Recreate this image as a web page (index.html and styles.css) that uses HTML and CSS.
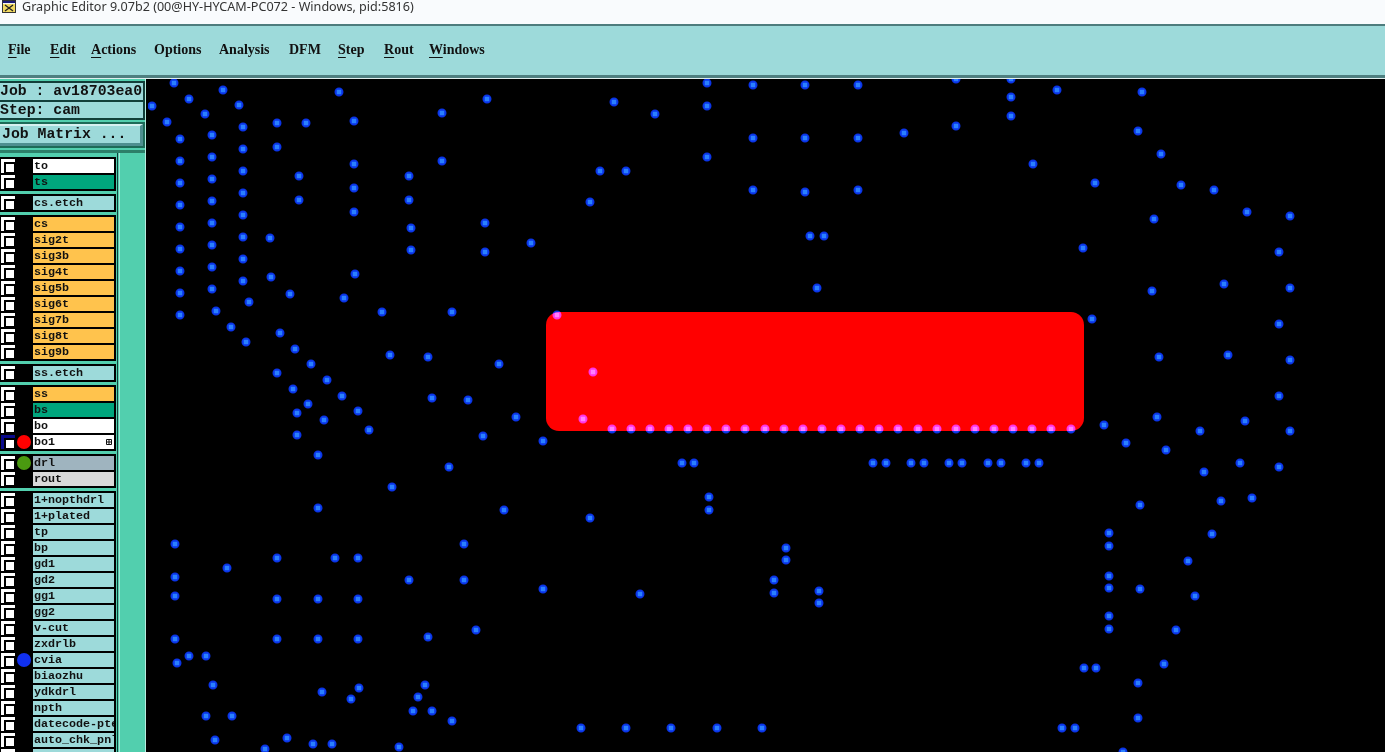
FILE: index.html
```html
<!DOCTYPE html>
<html lang="en">
<head>
<meta charset="utf-8">
<title>Graphic Editor</title>
<link rel="stylesheet" href="styles.css">
</head>
<body>
<header class="titlebar">
  <svg class="app-icon" viewBox="0 0 14 13" aria-hidden="true">
    <rect x="0" y="0" width="14" height="13" fill="#f4f4f4"/>
    <rect x="0" y="0" width="14" height="3" fill="#1c1c78"/>
    <rect x="1" y="4" width="12" height="8" fill="#f0d860"/>
    <path d="M3 5l8 6M11 5l-8 6" stroke="#222" stroke-width="1.3" fill="none"/>
    <rect x="0.5" y="0.5" width="13" height="12" fill="none" stroke="#333"/>
  </svg>
  <span class="title-text">Graphic Editor 9.07b2 (00@HY-HYCAM-PC072 - Windows, pid:5816)</span>
</header>
<nav class="menubar">
  <span class="menu-item m-file"><u>F</u>ile</span>
  <span class="menu-item m-edit"><u>E</u>dit</span>
  <span class="menu-item m-actions"><u>A</u>ctions</span>
  <span class="menu-item m-options">Options</span>
  <span class="menu-item m-analysis">Analysis</span>
  <span class="menu-item m-dfm">DFM</span>
  <span class="menu-item m-step"><u>S</u>tep</span>
  <span class="menu-item m-rout"><u>R</u>out</span>
  <span class="menu-item m-windows"><u>W</u>indows</span>
</nav>
<main class="workspace">
  <aside class="sidebar">
    <div class="info info-first">Job : av18703ea0</div>
    <div class="info">Step: cam</div>
    <div class="matrix-frame"><button class="matrix-btn" type="button">Job Matrix ...</button></div>
    <div class="side-body">
      <div class="layers">
        <section class="group">
          <div class="row"><span class="check"></span><span class="spot"></span><span class="label c-white">to</span></div>
          <div class="row"><span class="check"></span><span class="spot"></span><span class="label c-teal">ts</span></div>
        </section>
        <section class="group">
          <div class="row"><span class="check"></span><span class="spot"></span><span class="label c-pale">cs.etch</span></div>
        </section>
        <section class="group">
          <div class="row"><span class="check"></span><span class="spot"></span><span class="label c-orange">cs</span></div>
          <div class="row"><span class="check"></span><span class="spot"></span><span class="label c-orange">sig2t</span></div>
          <div class="row"><span class="check"></span><span class="spot"></span><span class="label c-orange">sig3b</span></div>
          <div class="row"><span class="check"></span><span class="spot"></span><span class="label c-orange">sig4t</span></div>
          <div class="row"><span class="check"></span><span class="spot"></span><span class="label c-orange">sig5b</span></div>
          <div class="row"><span class="check"></span><span class="spot"></span><span class="label c-orange">sig6t</span></div>
          <div class="row"><span class="check"></span><span class="spot"></span><span class="label c-orange">sig7b</span></div>
          <div class="row"><span class="check"></span><span class="spot"></span><span class="label c-orange">sig8t</span></div>
          <div class="row"><span class="check"></span><span class="spot"></span><span class="label c-orange">sig9b</span></div>
        </section>
        <section class="group">
          <div class="row"><span class="check"></span><span class="spot"></span><span class="label c-pale">ss.etch</span></div>
        </section>
        <section class="group">
          <div class="row"><span class="check"></span><span class="spot"></span><span class="label c-orange">ss</span></div>
          <div class="row"><span class="check"></span><span class="spot"></span><span class="label c-teal">bs</span></div>
          <div class="row"><span class="check"></span><span class="spot"></span><span class="label c-white">bo</span></div>
          <div class="row"><span class="check check-active"></span><span class="spot s-red"></span><span class="label c-white">bo1<svg class="mini" viewBox="0 0 6 6" aria-hidden="true"><path d="M.5.5h5v5h-5zM3 .5v5M.5 3h5" fill="none" stroke="#111"/></svg></span></div>
        </section>
        <section class="group">
          <div class="row"><span class="check"></span><span class="spot s-green"></span><span class="label c-slate">drl</span></div>
          <div class="row"><span class="check"></span><span class="spot"></span><span class="label c-gray">rout</span></div>
        </section>
        <section class="group">
          <div class="row"><span class="check"></span><span class="spot"></span><span class="label c-pale">1+nopthdrl</span></div>
          <div class="row"><span class="check"></span><span class="spot"></span><span class="label c-pale">1+plated</span></div>
          <div class="row"><span class="check"></span><span class="spot"></span><span class="label c-pale">tp</span></div>
          <div class="row"><span class="check"></span><span class="spot"></span><span class="label c-pale">bp</span></div>
          <div class="row"><span class="check"></span><span class="spot"></span><span class="label c-pale">gd1</span></div>
          <div class="row"><span class="check"></span><span class="spot"></span><span class="label c-pale">gd2</span></div>
          <div class="row"><span class="check"></span><span class="spot"></span><span class="label c-pale">gg1</span></div>
          <div class="row"><span class="check"></span><span class="spot"></span><span class="label c-pale">gg2</span></div>
          <div class="row"><span class="check"></span><span class="spot"></span><span class="label c-pale">v-cut</span></div>
          <div class="row"><span class="check"></span><span class="spot"></span><span class="label c-pale">zxdrlb</span></div>
          <div class="row"><span class="check"></span><span class="spot s-blue"></span><span class="label c-pale">cvia</span></div>
          <div class="row"><span class="check"></span><span class="spot"></span><span class="label c-pale">biaozhu</span></div>
          <div class="row"><span class="check"></span><span class="spot"></span><span class="label c-pale">ydkdrl</span></div>
          <div class="row"><span class="check"></span><span class="spot"></span><span class="label c-pale">npth</span></div>
          <div class="row"><span class="check"></span><span class="spot"></span><span class="label c-pale">datecode-pte</span></div>
          <div class="row"><span class="check"></span><span class="spot"></span><span class="label c-pale">auto_chk_pnl</span></div>
          <div class="row"><span class="check"></span><span class="spot"></span><span class="label c-pale"></span></div>
        </section>
      </div>
      <div class="scroll-gutter"></div>
    </div>
  </aside>
  <svg class="board" viewBox="148 79 1237 673" preserveAspectRatio="xMinYMin slice" aria-label="PCB layer view">
    <defs>
      <path id="pads" d="M174 83h0M223 90h0M189 99h0M152 106h0M239 105h0M205 114h0M167 122h0M243 127h0M277 123h0M306 123h0M354 121h0M339 92h0M442 113h0M487 99h0M180 139h0M212 135h0M243 149h0M277 147h0M180 161h0M212 157h0M243 171h0M354 164h0M442 161h0M299 176h0M409 176h0M180 183h0M212 179h0M243 193h0M354 188h0M299 200h0M409 200h0M180 205h0M212 201h0M354 212h0M243 215h0M180 227h0M212 223h0M411 228h0M485 223h0M243 237h0M270 238h0M180 249h0M212 245h0M411 250h0M485 252h0M531 243h0M243 259h0M180 271h0M212 267h0M243 281h0M271 277h0M355 274h0M180 293h0M212 289h0M290 294h0M344 298h0M249 302h0M180 315h0M216 311h0M382 312h0M452 312h0M231 327h0M280 333h0M246 342h0M295 349h0M390 355h0M428 357h0M311 364h0M499 364h0M277 373h0M327 380h0M293 389h0M342 396h0M432 398h0M468 400h0M308 404h0M358 411h0M297 413h0M324 420h0M516 417h0M369 430h0M297 435h0M483 436h0M543 441h0M318 455h0M449 467h0M392 487h0M318 508h0M504 510h0M175 544h0M464 544h0M277 558h0M335 558h0M358 558h0M227 568h0M175 577h0M409 580h0M464 580h0M175 596h0M543 589h0M277 599h0M318 599h0M358 599h0M476 630h0M175 639h0M277 639h0M318 639h0M358 639h0M428 637h0M189 656h0M206 656h0M177 663h0M213 685h0M425 685h0M359 688h0M322 692h0M351 699h0M418 697h0M413 711h0M432 711h0M452 721h0M206 716h0M232 716h0M215 740h0M287 738h0M313 744h0M332 744h0M399 747h0M265 749h0M1057 90h0M1142 92h0M1138 131h0M1161 154h0M1095 183h0M1181 185h0M1214 190h0M1247 212h0M1290 216h0M1154 219h0M1083 248h0M1279 252h0M1224 284h0M1290 288h0M1152 291h0M1092 319h0M1279 324h0M1159 357h0M1228 355h0M1290 360h0M1279 396h0M1157 417h0M1245 421h0M1104 425h0M1200 431h0M1290 431h0M1126 443h0M1166 450h0M1240 463h0M1279 467h0M1204 472h0M1221 501h0M1252 498h0M1140 505h0M1109 533h0M1212 534h0M1109 546h0M1188 561h0M1109 576h0M1109 588h0M1140 589h0M1195 596h0M1109 616h0M1109 629h0M1176 630h0M1164 664h0M1084 668h0M1096 668h0M1138 683h0M1138 718h0M1062 728h0M1075 728h0M1123 752h0M707 83h0M753 85h0M805 85h0M858 85h0M956 79h0M1011 79h0M614 102h0M655 114h0M707 106h0M1011 97h0M1011 116h0M956 126h0M904 133h0M753 138h0M805 138h0M858 138h0M707 157h0M600 171h0M626 171h0M1033 164h0M753 190h0M805 192h0M858 190h0M590 202h0M810 236h0M824 236h0M817 288h0M682 463h0M694 463h0M873 463h0M886 463h0M911 463h0M924 463h0M949 463h0M962 463h0M988 463h0M1001 463h0M1026 463h0M1039 463h0M709 497h0M709 510h0M590 518h0M786 548h0M786 560h0M774 580h0M774 593h0M819 591h0M819 603h0M640 594h0M581 728h0M626 728h0M671 728h0M717 728h0M762 728h0M557 315h0M593 372h0M583 419h0M612 429h0M631 429h0M650 429h0M669 429h0M688 429h0M707 429h0M726 429h0M745 429h0M765 429h0M784 429h0M803 429h0M822 429h0M841 429h0M860 429h0M879 429h0M898 429h0M918 429h0M937 429h0M956 429h0M975 429h0M994 429h0M1013 429h0M1032 429h0M1051 429h0M1071 429h0"/>
    </defs>
    <rect class="plane" x="546" y="312" width="538" height="119" rx="13" ry="13"/>
    <g class="pad-layer">
      <use href="#pads" class="pad-halo"/>
      <use href="#pads" class="pad-core"/>
    </g>
  </svg>
</main>
</body>
</html>
```
FILE: styles.css
```css
* { box-sizing: border-box; }
html, body {
  margin: 0;
  height: 752px;
  overflow: hidden;
  background: #000;
}
body {
  display: flex;
  flex-direction: column;
  width: 1385px;
}
.titlebar {
  height: 26px;
  flex: none;
  display: flex;
  align-items: flex-start;
  padding-left: 2px;
  gap: 6px;
  background: #f9fbfd;
  border-bottom: 2px solid #4e7c7d;
}
.app-icon {
  width: 14px;
  height: 13px;
  flex: none;
}
.title-text {
  font: 12.6px/14px "Noto Sans", sans-serif;
  color: #333;
  white-space: nowrap;
}
.menubar {
  height: 52px;
  flex: none;
  display: flex;
  align-items: center;
  padding: 0 0 1px 8px;
  background: #9ddada;
  border-bottom: 3px solid #4e7f80;
  font: bold 14px/18px "Liberation Serif", serif;
  color: #111;
}
.menu-item { white-space: nowrap; }
.menu-item u { text-underline-offset: 3px; }
.m-file { width: 42px; }
.m-edit { width: 41px; }
.m-actions { width: 63px; }
.m-options { width: 65px; }
.m-analysis { width: 70px; }
.m-dfm { width: 49px; }
.m-step { width: 46px; }
.m-rout { width: 45px; }
.workspace {
  flex: 1;
  min-height: 0;
  display: flex;
  border-top: 1px solid #dfeeee;
}
.sidebar {
  width: 146px;
  flex: none;
  display: flex;
  flex-direction: column;
  padding-top: 2px;
  background: #52cfae;
  overflow: hidden;
  border-right: 1px solid #b5ecdf;
}
.board {
  flex: 1;
  min-width: 0;
  height: 100%;
  display: block;
  margin-left: 2px;
  background: #000;
}
.info {
  height: 18px;
  border-right: 2px solid #123f3a;
  border-bottom: 2px solid #123f3a;
  background: #9ddada;
  font: bold 14.8px/16px "Liberation Mono", monospace;
  color: #111;
  white-space: pre;
  overflow: hidden;
}
.info-first {
  height: 21px;
  border-top: 2px solid #123f3a;
  line-height: 17px;
}
.matrix-frame {
  margin-top: 2px;
  height: 26px;
  border: solid #1d6b58;
  border-width: 2px 2px 2px 0;
}
.matrix-btn {
  display: block;
  width: 100%;
  height: 22px;
  margin: 0;
  padding: 0 0 0 2px;
  text-align: left;
  background: #9ddada;
  border-style: solid;
  border-width: 2px 3px 3px 0;
  border-color: #d6f1f1 #4e8f90 #4e8f90 #d6f1f1;
  font: bold 14.8px/17px "Liberation Mono", monospace;
  color: #111;
}
.side-body {
  flex: 1;
  min-height: 0;
  display: flex;
  margin-top: 2px;
  border-top: 3px solid #2c7f69;
}
.layers {
  width: 118px;
  flex: none;
  padding-top: 4px;
  padding-right: 1px;
  border-right: 1px solid #123f3a;
  display: flex;
  flex-direction: column;
  gap: 3px;
}
.scroll-gutter {
  flex: 1;
  margin-left: 1px;
  border-left: 1px solid #a8e8d8;
}
.group {
  display: flex;
  flex-direction: column;
  gap: 2px;
  padding: 2px 0;
  background: #000;
}
.row {
  height: 14px;
  flex: none;
  display: flex;
  align-items: center;
}
.check {
  width: 14px;
  height: 14px;
  flex: none;
  margin-left: 1px;
  padding: 3px;
  background: #fff;
}
.check::before {
  content: "";
  display: block;
  width: 8px;
  height: 8px;
  border: 2px solid #000;
  background: #fff;
}
.check-active { background: #0a0a8c; }
.spot {
  width: 14px;
  height: 14px;
  flex: none;
  margin: 0 2px;
  border-radius: 50%;
}
.s-red { background: #ff0000; }
.s-green { background: #4a9a10; }
.s-blue { background: #1030f0; }
.label {
  width: 81px;
  height: 14px;
  flex: none;
  display: flex;
  align-items: center;
  justify-content: space-between;
  padding: 0 2px 0 1px;
  overflow: hidden;
  white-space: nowrap;
  font: bold 11.7px/14px "Liberation Mono", monospace;
  color: #111;
}
.mini { width: 6px; height: 6px; flex: none; }
.c-white { background: #fff; }
.c-teal { background: #00a67d; }
.c-pale { background: #9ddada; }
.c-orange { background: #ffc34d; }
.c-slate { background: #9fb4bf; }
.c-gray { background: #d9d9d9; }
.plane { fill: #ff0000; }
.pad-layer { mix-blend-mode: screen; isolation: isolate; }
.pad-halo {
  fill: none;
  stroke: #0a34e8;
  stroke-width: 9;
  stroke-linecap: round;
}
.pad-core {
  fill: none;
  stroke: #2a80ff;
  stroke-width: 4.5;
  stroke-linecap: square;
}
```
